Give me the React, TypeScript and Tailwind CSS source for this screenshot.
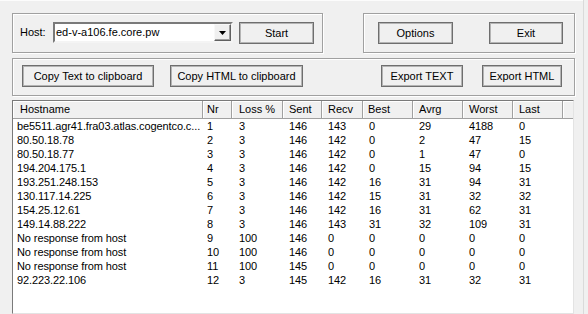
import React from 'react'

type Row = [string, string, string, string, string, string, string, string, string]

const rows: Row[] = [
  ['be5511.agr41.fra03.atlas.cogentco.c...', '1', '3', '146', '143', '0', '29', '4188', '0'],
  ['80.50.18.78', '2', '3', '146', '142', '0', '2', '47', '15'],
  ['80.50.18.77', '3', '3', '146', '142', '0', '1', '47', '0'],
  ['194.204.175.1', '4', '3', '146', '142', '0', '15', '94', '15'],
  ['193.251.248.153', '5', '3', '146', '142', '16', '31', '94', '31'],
  ['130.117.14.225', '6', '3', '146', '142', '15', '31', '32', '32'],
  ['154.25.12.61', '7', '3', '146', '142', '16', '31', '62', '31'],
  ['149.14.88.222', '8', '3', '146', '143', '31', '32', '109', '31'],
  ['No response from host', '9', '100', '146', '0', '0', '0', '0', '0'],
  ['No response from host', '10', '100', '146', '0', '0', '0', '0', '0'],
  ['No response from host', '11', '100', '145', '0', '0', '0', '0', '0'],
  ['92.223.22.106', '12', '3', '145', '142', '16', '31', '32', '31'],
]

const columns = [
  { title: 'Hostname', width: 'w-[190px]', head: 'pl-[7px]', cell: 'pl-[4px]' },
  { title: 'Nr', width: 'w-[29px]', head: 'pl-[4px]', cell: 'pl-[4px]' },
  { title: 'Loss %', width: 'w-[51px]', head: 'pl-[7px]', cell: 'pl-[7px]' },
  { title: 'Sent', width: 'w-[39px]', head: 'pl-[6px]', cell: 'pl-[6px]' },
  { title: 'Recv', width: 'w-[41px]', head: 'pl-[6px]', cell: 'pl-[6px]' },
  { title: 'Best', width: 'w-[50px]', head: 'pl-[5px]', cell: 'pl-[6px]' },
  { title: 'Avrg', width: 'w-[50px]', head: 'pl-[6px]', cell: 'pl-[6px]' },
  { title: 'Worst', width: 'w-[50px]', head: 'pl-[6px]', cell: 'pl-[6px]' },
  { title: 'Last', width: 'w-[50px]', head: 'pl-[6px]', cell: 'pl-[6px]' },
]

const Button: React.FC<{ label: string; width: string }> = ({ label, width }) => (
  <button
    className={`${width} h-[22px] shrink-0 bg-[#f0f0f0] border border-[#6e6e6e] shadow-[inset_1px_1px_0_#b4b4b4,inset_-1px_-1px_0_#b4b4b4] text-[11px] leading-none text-black`}
  >
    {label}
  </button>
)

const GroupBox: React.FC<{ className: string; children: React.ReactNode }> = ({ className, children }) => (
  <div
    className={`${className} border border-[#a0a0a0] shadow-[inset_1px_1px_0_#fff,1px_1px_0_#fff]`}
  >
    {children}
  </div>
)

const App: React.FC = () => {
  return (
    <div className="flex w-[588px] h-[314px] bg-[#f0f0f0] overflow-hidden font-['Liberation_Sans',Arial,sans-serif] text-[11px] text-black">
      <div className="w-[583px] shrink-0 flex flex-col border-t border-[#fcfcfc] pt-[12px] pl-[12px]">
        <div className="flex items-start">
          <GroupBox className="w-[311px] h-[40px] flex items-start pt-[8px] pl-[7px]">
            <span className="w-[33px] h-[21px] leading-[21px]">Host:</span>
            <div className="w-[180px] h-[21px] flex items-stretch bg-white border-2 border-t-[#7a7a7a] border-l-[#7a7a7a] border-b-[#f4f4f4] border-r-[#f4f4f4]">
              <span className="flex-1 pl-[1px] leading-[17px]">ed-v-a106.fe.core.pw</span>
              <div className="w-[17px] flex items-center justify-center bg-[#f0f0f0] border border-t-[#f8f8f8] border-l-[#f8f8f8] border-b-[#606060] border-r-[#606060] shadow-[inset_-1px_-1px_0_#a0a0a0]">
                <svg width="7" height="4" viewBox="0 0 7 4">
                  <path d="M0 0h7L3.5 4z" fill="#000" />
                </svg>
              </div>
            </div>
            <div className="ml-[6px]">
              <Button label="Start" width="w-[75px]" />
            </div>
          </GroupBox>
          <GroupBox className="ml-[40px] w-[212px] h-[40px] flex items-start pt-[8px] pl-[14px]">
            <Button label="Options" width="w-[75px]" />
            <div className="ml-[36px]">
              <Button label="Exit" width="w-[74px]" />
            </div>
          </GroupBox>
        </div>

        <GroupBox className="mt-[5px] w-[563px] h-[38px] flex items-start justify-between pt-[6px] pl-[9px] pr-[12px]">
          <div className="flex gap-[16px]">
            <Button label="Copy Text to clipboard" width="w-[132px]" />
            <Button label="Copy HTML to clipboard" width="w-[133px]" />
          </div>
          <div className="flex gap-[19px]">
            <Button label="Export TEXT" width="w-[82px]" />
            <Button label="Export HTML" width="w-[80px]" />
          </div>
        </GroupBox>

        <div className="mt-[4px] w-[562px] h-[214px] flex flex-col bg-white border border-t-[#7a7a7a] border-l-[#7a7a7a] border-b-[#e3e3e3] border-r-[#e3e3e3]">
          <div className="flex h-[18px] shrink-0 bg-[#f0f0f0] border-b border-[#a0a0a0]">
            {columns.map((c) => (
              <div
                key={c.title}
                className={`${c.width} ${c.head} shrink-0 border-r border-[#a0a0a0] shadow-[inset_1px_1px_0_#fff] leading-[17px] whitespace-nowrap`}
              >
                {c.title}
              </div>
            ))}
            <div className="flex-1 shadow-[inset_1px_1px_0_#fff]" />
          </div>
          {rows.map((r, i) => (
            <div key={i} className="flex h-[14px] shrink-0 tracking-[-0.1px]">
              {r.map((v, j) => (
                <div
                  key={j}
                  className={`${columns[j].width} ${columns[j].cell} shrink-0 leading-[14px] whitespace-nowrap overflow-hidden`}
                >
                  {v}
                </div>
              ))}
            </div>
          ))}
        </div>
      </div>
      <div className="flex-1 border-l border-[#dadada] bg-[#f0f0f0]" />
    </div>
  )
}

export default App
